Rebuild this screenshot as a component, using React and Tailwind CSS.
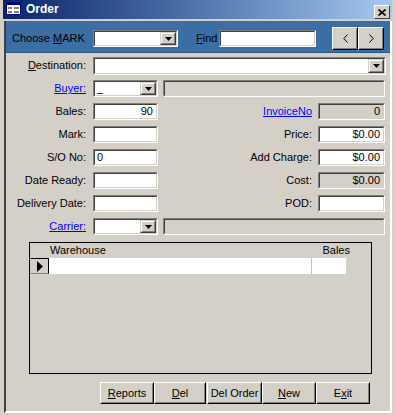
import React from 'react'

function Sunken({ className = '', bg = 'bg-white', children }) {
  return (
    <div className={`border border-t-[#808080] border-l-[#808080] border-r-white border-b-white ${className}`}>
      <div className={`h-full w-full border border-t-[#404040] border-l-[#404040] border-r-[#d4d0c8] border-b-[#d4d0c8] ${bg} flex items-center`}>
        {children}
      </div>
    </div>
  )
}

function DropBtn() {
  return (
    <div className="ml-auto w-[16px] h-full border border-t-[#d4d0c8] border-l-[#d4d0c8] border-r-[#404040] border-b-[#404040] bg-[#d4d0c8]">
      <div className="h-full w-full border border-t-white border-l-white border-r-[#808080] border-b-[#808080] flex items-center justify-center">
        <svg width="7" height="4" viewBox="0 0 7 4">
          <path d="M0 0h7L3.5 4z" fill="#000" />
        </svg>
      </div>
    </div>
  )
}

function Combo({ className = '', value }) {
  return (
    <Sunken className={className}>
      <span className="pl-[2px] leading-none">{value}</span>
      <DropBtn />
    </Sunken>
  )
}

function Label({ children, link }) {
  return (
    <div className="w-[80px] text-right leading-[17px] whitespace-nowrap">
      {link ? <span className="text-[#0000ff] underline">{children}</span> : children}
    </div>
  )
}

function Cmd({ className = '', children }) {
  return (
    <div className={`h-[22px] border border-t-white border-l-white border-r-black border-b-black bg-[#d4d0c8] ${className}`}>
      <div className="h-full w-full border border-t-transparent border-l-transparent border-r-[#808080] border-b-[#808080] flex items-center justify-center">
        {children}
      </div>
    </div>
  )
}

function RightField({ label, value, link, gray }) {
  return (
    <>
      <div className="flex-1 text-right leading-[17px] whitespace-nowrap">
        {link ? <span className="text-[#0000ff] underline">{label}</span> : label}
      </div>
      <Sunken className="ml-[6px] w-[67px] h-[17px]" bg={gray ? 'bg-[#d4d0c8]' : 'bg-white'}>
        <span className="ml-auto pr-[3px]">{value}</span>
      </Sunken>
    </>
  )
}

function Row({ label, link, value = '', right, alignRight }) {
  return (
    <div className="mt-[6px] h-[17px] flex items-center pr-[5px]">
      <Label link={link}>{label}</Label>
      <Sunken className="ml-[7px] w-[65px] h-[17px]">
        <span className={alignRight ? 'ml-auto pr-[3px]' : 'pl-[2px]'}>{value}</span>
      </Sunken>
      {right ? <RightField {...right} /> : <div className="flex-1" />}
    </div>
  )
}

export default function App() {
  return (
    <div className="w-[395px] h-[415px] bg-[#d4d0c8] overflow-hidden text-[11px] text-black font-['Liberation_Sans',Arial,sans-serif]">
      {/* title bar */}
      <div className="px-[3px]">
        <div className="h-[19px] flex items-start bg-gradient-to-r from-[#0a246a] to-[#a6caf0]">
          <svg className="mt-[2px] ml-[3px]" width="15" height="13" viewBox="0 0 15 13">
            <rect x="0.5" y="0.5" width="14" height="12" fill="#fff" stroke="#000080" />
            <rect x="1" y="1" width="13" height="2" fill="#000080" />
            <rect x="2" y="5" width="4" height="2" fill="#808080" />
            <rect x="8" y="5" width="5" height="2" fill="#808080" />
            <rect x="2" y="9" width="4" height="2" fill="#808080" />
            <rect x="8" y="9" width="5" height="2" fill="#808080" />
          </svg>
          <span className="ml-[5px] mt-[2px] text-white font-bold text-[12px] leading-[14px]">Order</span>
          <div className="ml-auto mr-[2px] mt-[5px] w-[16px] h-[14px] border border-t-white border-l-white border-r-[#404040] border-b-[#404040] bg-[#d4d0c8] flex items-center justify-center">
            <svg width="8" height="7" viewBox="0 0 8 7">
              <path d="M0.5 0.5L7.5 6.5M7.5 0.5L0.5 6.5" stroke="#000" strokeWidth="1.6" />
            </svg>
          </div>
        </div>
      </div>

      {/* form */}
      <div className="mt-[2px] ml-[4px] w-[388px] h-[392px] border-l-2 border-l-[#404040] border-r-2 border-r-white border-b-2 border-b-white flex flex-col">
        {/* header band */}
        <div className="h-[32px] pt-[4px] bg-[#3a6ea5] border-b border-b-[#2a5585] flex items-center pl-[6px]">
          <div className="w-[81px] whitespace-nowrap">
            Choose <span className="underline">M</span>ARK
          </div>
          <Combo className="w-[85px] h-[17px]" />
          <div className="ml-[18px] w-[23px]">
            <span className="underline">F</span>ind
          </div>
          <Sunken className="w-[97px] h-[17px]" />
          <div className="ml-[16px] flex">
            <Cmd className="w-[26px] h-[23px]">
              <svg width="5" height="9" viewBox="0 0 5 9">
                <path d="M4.5 0.5L0.8 4.5L4.5 8.5" fill="none" stroke="#000" />
              </svg>
            </Cmd>
            <Cmd className="w-[26px] h-[23px]">
              <svg width="5" height="9" viewBox="0 0 5 9">
                <path d="M0.5 0.5L4.2 4.5L0.5 8.5" fill="none" stroke="#000" />
              </svg>
            </Cmd>
          </div>
        </div>

        {/* detail */}
        <div className="flex flex-col pt-[-1px]">
          <div className="mt-[4px] h-[17px] flex items-center pr-[4px]">
            <Label>
              <span className="underline">D</span>estination:
            </Label>
            <Combo className="ml-[7px] flex-1 h-[18px]" />
          </div>

          <div className="mt-[6px] h-[17px] flex items-center pr-[5px]">
            <Label link>Buyer:</Label>
            <Combo className="ml-[7px] w-[65px] h-[17px]" value="_" />
            <Sunken className="ml-[5px] flex-1 h-[17px]" bg="bg-[#d4d0c8]" />
          </div>

          <Row label="Bales:" value="90" alignRight right={{ label: 'InvoiceNo', value: '0', link: true, gray: true }} />
          <Row label="Mark:" right={{ label: 'Price:', value: '$0.00' }} />
          <Row label="S/O No:" value="0" right={{ label: 'Add Charge:', value: '$0.00' }} />
          <Row label="Date Ready:" right={{ label: 'Cost:', value: '$0.00', gray: true }} />
          <Row label="Delivery Date:" right={{ label: 'POD:', value: '' }} />

          <div className="mt-[6px] h-[17px] flex items-center pr-[5px]">
            <Label link>Carrier:</Label>
            <Combo className="ml-[7px] w-[65px] h-[17px]" />
            <Sunken className="ml-[5px] flex-1 h-[17px]" bg="bg-[#d4d0c8]" />
          </div>

          {/* subform */}
          <div className="mt-[7px] ml-[23px] w-[343px] h-[132px] border border-black flex flex-col">
            <div className="h-[15px] flex items-center">
              <div className="w-[20px]" />
              <div className="w-[263px] leading-[15px]">Warehouse</div>
              <div className="w-[37px] text-right leading-[15px]">Bales</div>
            </div>
            <div className="h-[16px] flex">
              <div className="w-[19px] h-full border border-t-black border-l-[#d4d0c8] border-r-black border-b-[#808080] bg-[#d4d0c8] flex items-center pl-[6px]">
                <svg width="6" height="11" viewBox="0 0 6 11">
                  <path d="M0 0L6 5.5L0 11z" fill="#000" />
                </svg>
              </div>
              <div className="w-[263px] h-full bg-white border-r border-r-[#c0c0c0]" />
              <div className="w-[34px] h-full bg-white" />
            </div>
          </div>

          {/* buttons */}
          <div className="mt-[8px] ml-[94px] flex">
            <Cmd className="w-[54px]">
              <span><span className="underline">R</span>eports</span>
            </Cmd>
            <Cmd className="w-[52px]">
              <span><span className="underline">D</span>el</span>
            </Cmd>
            <Cmd className="ml-[1px] w-[55px]">
              <span>Del Order</span>
            </Cmd>
            <Cmd className="w-[54px]">
              <span><span className="underline">N</span>ew</span>
            </Cmd>
            <Cmd className="w-[54px]">
              <span>E<span className="underline">x</span>it</span>
            </Cmd>
          </div>
        </div>
      </div>
    </div>
  )
}
